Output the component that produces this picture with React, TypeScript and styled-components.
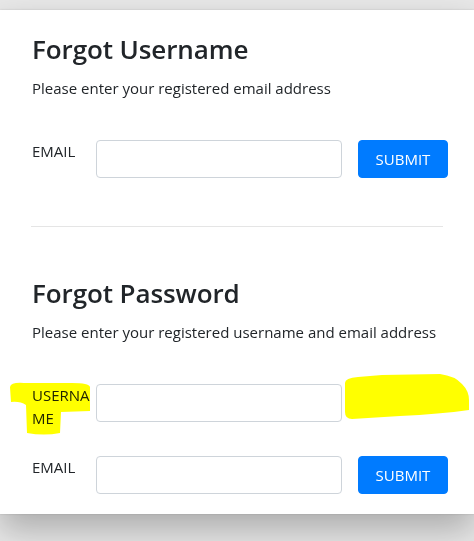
import styled, { createGlobalStyle } from "styled-components";

const GlobalStyle = createGlobalStyle`
  html, body {
    margin: 0;
    padding: 0;
    background: #e8e8e8;
  }
  body {
    font-family: "Open Sans", "Noto Sans", sans-serif;
    color: #212529;
  }
  * { box-sizing: border-box; }
`;

const Page = styled.div`
  position: relative;
  height: 541px;
  padding-top: 10px;
  overflow: hidden;
`;

const Card = styled.div`
  background: #fff;
  padding: 22px 26px 20px 32px;
  box-shadow: 0 16px 32px rgba(0, 0, 0, 0.26), 0 0 2px rgba(0, 0, 0, 0.15);
`;

const Title = styled.h2`
  margin: 2px 0 0;
  font-size: 26px;
  font-weight: 600;
  line-height: 1.2;
  letter-spacing: -0.1px;
`;

const Lead = styled.p`
  margin: 11px 0 40px;
  font-size: 15px;
  line-height: 24px;
`;

const Row = styled.div<{ $last?: boolean }>`
  display: grid;
  grid-template-columns: 64px 246px 106px;
  align-items: start;
  margin-bottom: ${(p) => (p.$last ? "0" : "26px")};
`;

const Label = styled.label`
  width: 60px;
  font-size: 15px;
  line-height: 23px;
  overflow-wrap: anywhere;
  word-break: break-all;
`;

const Input = styled.input`
  width: 246px;
  height: 38px;
  border: 1px solid #ced4da;
  border-radius: 4px;
  background: #fff;
  font: inherit;
  padding: 6px 12px;
`;

const Button = styled.button`
  width: 90px;
  height: 38px;
  margin-left: 16px;
  border: 1px solid #007bff;
  border-radius: 4px;
  background: #007bff;
  color: #fff;
  font-family: inherit;
  font-size: 15px;
  padding: 0;
`;

const Divider = styled.hr`
  margin: 48px 5px 51px -1px;
  border: 0;
  border-top: 1px solid #e5e5e5;
`;

const Scribble = styled.svg`
  position: absolute;
  inset: 0;
  pointer-events: none;
  mix-blend-mode: multiply;
`;

export default function App() {
  return (
    <>
      <GlobalStyle />
      <Page>
        <Card>
          <Title>Forgot Username</Title>
          <Lead>Please enter your registered email address</Lead>
          <Row $last>
            <Label>EMAIL</Label>
            <Input type="email" />
            <Button>SUBMIT</Button>
          </Row>

          <Divider />

          <Title>Forgot Password</Title>
          <Lead>Please enter your registered username and email address</Lead>
          <Row>
            <Label>USERNAME</Label>
            <Input type="text" />
          </Row>
          <Row $last>
            <Label>EMAIL</Label>
            <Input type="email" />
            <Button>SUBMIT</Button>
          </Row>
        </Card>

        {/* yellow marker scribbles over the form */}
        <Scribble width="474" height="541" viewBox="0 0 474 541">
          <path
            d="M10,387 Q11,382 24,383 L72,383 Q89,383 90,387 L90,411 L61,412 L60,433 Q44,436 27,433 L26,405 Q20,401 11,402 Z"
            fill="#ffff00"
          />
          <path
            d="M345,383 Q345,378 358,377 L382,375 L440,374 Q455,376 462,384 Q469,391 469,400 L469,410 Q440,414 400,416 L352,419 Q345,419 345,412 Z"
            fill="#ffff00"
          />
        </Scribble>
      </Page>
    </>
  );
}
